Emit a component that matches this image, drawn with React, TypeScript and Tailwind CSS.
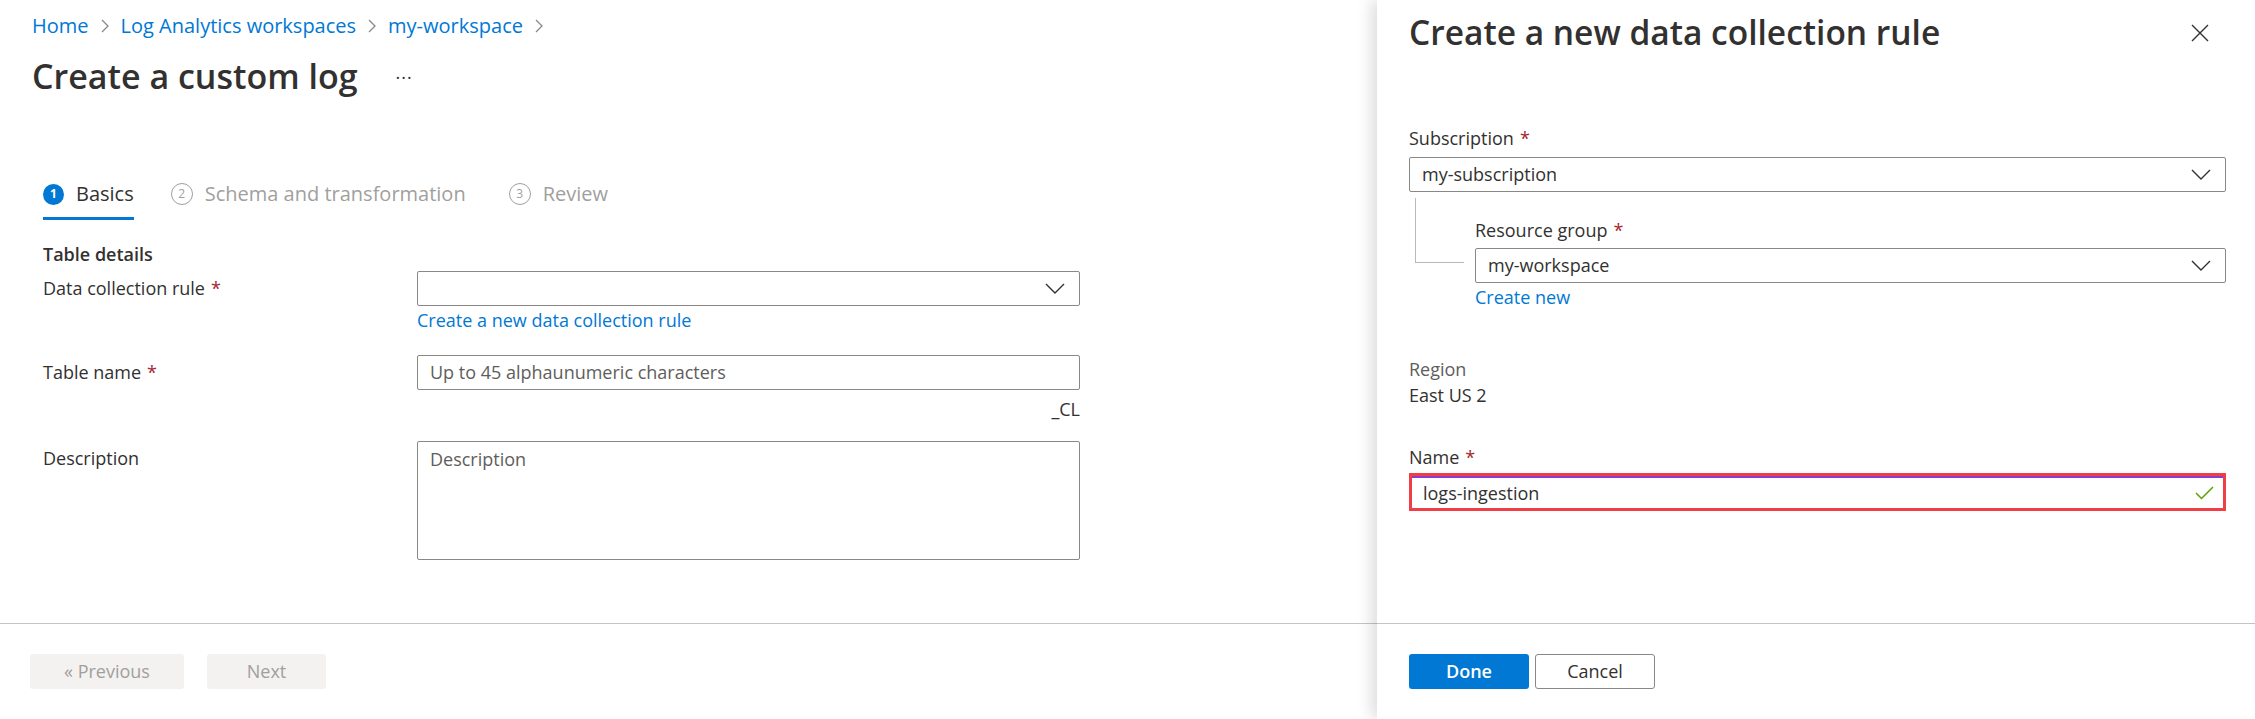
import { ReactNode } from "react";

const font = { fontFamily: '"Segoe UI", "Open Sans", "Noto Sans", sans-serif' };

function Chevron() {
  return (
    <svg width="20" height="11" viewBox="0 0 20 11" fill="none" className="shrink-0">
      <polyline points="1,1 10,10 19,1" stroke="#323130" strokeWidth="1.4" />
    </svg>
  );
}

function Crumb({ children }: { children: ReactNode }) {
  return (
    <>
      <span className="text-[#0078d4]">{children}</span>
      <svg width="8" height="14" viewBox="0 0 8 14" fill="none" className="mx-[12px]">
        <polyline points="1,1 7,7 1,13" stroke="#8a8886" strokeWidth="1.3" />
      </svg>
    </>
  );
}

function Req() {
  return <span className="ml-[6px] text-[#a4262c]">*</span>;
}

function Select({ value, className = "" }: { value?: string; className?: string }) {
  return (
    <div
      className={`flex h-[35px] items-center justify-between rounded-[2px] border border-[#8a8886] bg-white pl-[12px] pr-[14px] ${className}`}
    >
      <span className="text-[#323130]">{value}</span>
      <Chevron />
    </div>
  );
}

function Step({ n, label, active, className = "" }: { n: number; label: string; active?: boolean; className?: string }) {
  return (
    <div className={`flex flex-col ${className}`}>
      <div className="flex h-[36px] items-center">
        {active ? (
          <span className="flex h-[21px] w-[21px] items-center justify-center rounded-full bg-[#0078d4] text-[12px] font-bold text-white">
            {n}
          </span>
        ) : (
          <span className="flex h-[22px] w-[22px] items-center justify-center rounded-full border border-[#a19f9d] text-[12px] text-[#a19f9d]">
            {n}
          </span>
        )}
        <span className={`ml-[12px] ${active ? "text-[#323130]" : "text-[#a19f9d]"}`}>{label}</span>
      </div>
      <div className={`mt-[5px] h-[3px] ${active ? "bg-[#0078d4]" : "bg-transparent"}`} />
    </div>
  );
}

export default function App() {
  return (
    <div className="flex h-[719px] w-[2255px] overflow-hidden bg-white text-[18px] text-[#323130]" style={font}>
      {/* Main blade */}
      <main className="flex flex-1 flex-col">
        <div className="flex-1 pl-[32px]">
          <div className="mt-[13px] flex h-[26px] items-center text-[20px]">
            <Crumb>Home</Crumb>
            <Crumb>Log Analytics workspaces</Crumb>
            <Crumb>my-workspace</Crumb>
          </div>
          <div className="mt-[15px] flex h-[44px] items-center">
            <h1 className="text-[34px] font-semibold leading-none">Create a custom log</h1>
            <span className="ml-[38px] -mt-[8px] text-[18px] tracking-[1px]">...</span>
          </div>

          <div className="ml-[11px] mt-[78px] flex gap-[37px] text-[20px]">
            <Step n={1} label="Basics" active />
            <Step n={2} label="Schema and transformation" />
            <Step n={3} label="Review" className="ml-[6px]" />
          </div>

          <div className="ml-[11px] w-[1037px]">
            <div className="mt-[21px] flex h-[26px] items-center font-semibold">Table details</div>

            <div className="mt-[4px] grid grid-cols-[374px_1fr]">
              <div className="flex h-[35px] items-center">
                Data collection rule
                <Req />
              </div>
              <div>
                <Select />
                <div className="mt-[1px] flex h-[26px] items-center text-[#0078d4]">
                  Create a new data collection rule
                </div>
              </div>
            </div>

            <div className="mt-[22px] grid grid-cols-[374px_1fr]">
              <div className="flex h-[35px] items-center">
                Table name
                <Req />
              </div>
              <div>
                <div className="flex h-[35px] items-center rounded-[2px] border border-[#8a8886] pl-[12px] text-[#605e5c]">
                  Up to 45 alphaunumeric characters
                </div>
                <div className="mt-[7px] flex h-[24px] items-center justify-end">_CL</div>
              </div>
            </div>

            <div className="mt-[20px] grid grid-cols-[374px_1fr]">
              <div className="flex h-[35px] items-center">Description</div>
              <div className="h-[119px] rounded-[2px] border border-[#8a8886] pl-[12px] pt-[4px] text-[#605e5c]">
                Description
              </div>
            </div>
          </div>
        </div>

        <footer className="flex h-[96px] gap-[23px] border-t border-[#c4c4c4] pl-[30px] pt-[30px]">
          <button className="h-[35px] w-[154px] rounded-[3px] bg-[#f3f2f1] text-[#a19f9d]">« Previous</button>
          <button className="h-[35px] w-[119px] rounded-[3px] bg-[#f3f2f1] text-[#a19f9d]">Next</button>
        </footer>
      </main>

      {/* Side panel */}
      <aside className="relative flex w-[878px] flex-col bg-white shadow-[-6px_0_14px_rgba(0,0,0,0.13)]">
        <div className="flex-1 pl-[32px] pr-[29px]">
          <div className="mt-[11px] flex h-[44px] items-center justify-between">
            <h2 className="text-[33.5px] font-semibold leading-none">Create a new data collection rule</h2>
            <svg width="18" height="18" viewBox="0 0 18 18" className="mr-[17px]">
              <path d="M1 1L17 17M17 1L1 17" stroke="#323130" strokeWidth="1.4" />
            </svg>
          </div>

          <div className="mt-[70px] flex h-[26px] items-center">
            Subscription
            <Req />
          </div>
          <Select value="my-subscription" className="mt-[6px]" />

          <div className="flex">
            <div className="ml-[6px] mt-[6px] h-[65px] w-[49px] shrink-0 border-b border-l border-[#b9b9b9]" />
            <div className="ml-[11px] flex-1">
              <div className="mt-[25px] flex h-[26px] items-center">
                Resource group
                <Req />
              </div>
              <Select value="my-workspace" className="mt-[5px]" />
              <div className="mt-[1px] flex h-[26px] items-center text-[#0078d4]">Create new</div>
            </div>
          </div>

          <div className="mt-[46px] flex h-[26px] items-center text-[#605e5c]">Region</div>
          <div className="flex h-[26px] items-center">East US 2</div>

          <div className="mt-[36px] flex h-[26px] items-center">
            Name
            <Req />
          </div>
          <div className="mt-[3px] border-[3px] border-[#ef3e45]">
            <div className="flex h-[32px] items-center justify-between border-t-2 border-[#8a3ecf] bg-white pl-[11px] pr-[9px]">
              <span>logs-ingestion</span>
              <svg width="19" height="14" viewBox="0 0 19 14" fill="none">
                <polyline points="1,7 6.5,12.5 18,1" stroke="#57a300" strokeWidth="1.5" />
              </svg>
            </div>
          </div>
        </div>

        <footer className="flex h-[96px] gap-[6px] border-t border-[#c4c4c4] pl-[32px] pt-[30px]">
          <button className="h-[35px] w-[120px] rounded-[3px] bg-[#0078d4] font-semibold text-white">Done</button>
          <button className="h-[35px] w-[120px] rounded-[3px] border border-[#8a8886] bg-white text-[#323130]">
            Cancel
          </button>
        </footer>
      </aside>
    </div>
  );
}
